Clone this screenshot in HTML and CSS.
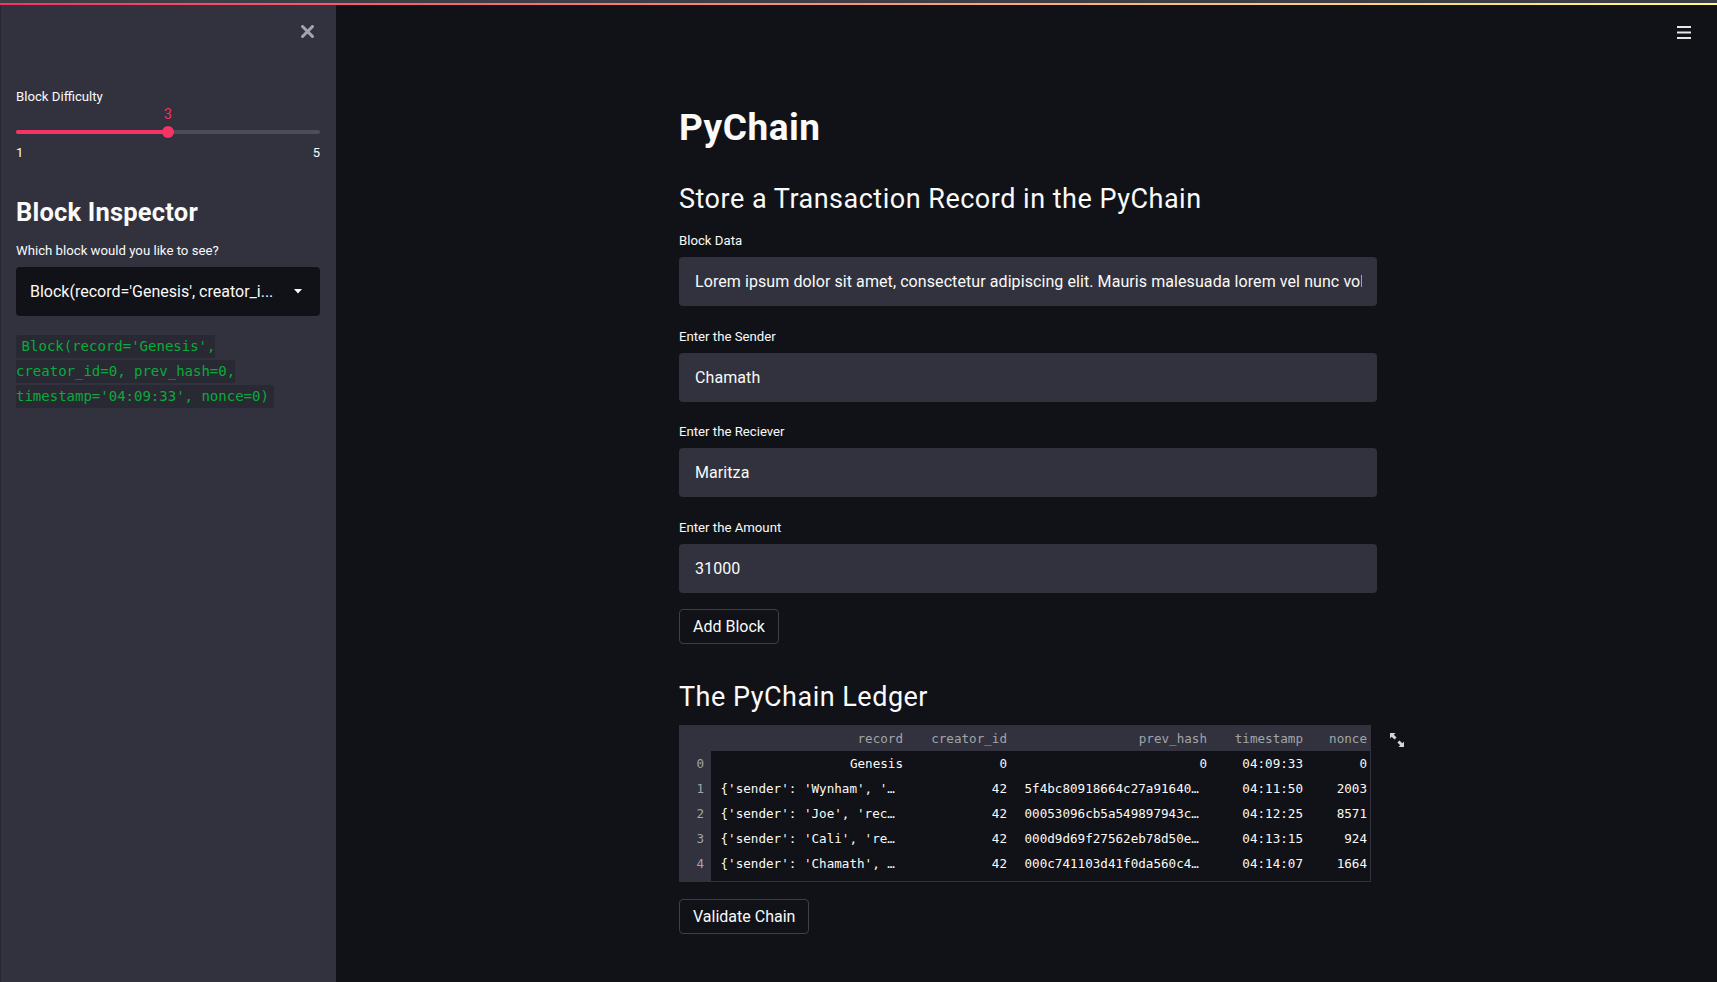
FILE: index.html
```html
<!DOCTYPE html>
<html lang="en">
<head>
<meta charset="utf-8">
<title>PyChain</title>
<link rel="stylesheet" href="styles.css">
</head>
<body>
<div class="topbar">
  <div class="topbar-chrome"></div>
  <div class="decoration"></div>
</div>
<div class="app">
  <aside class="sidebar">
    <div class="sidebar-close">
      <svg width="13" height="13" viewBox="0 0 13 13"><path d="M1.6 1.6L11.4 11.4M11.4 1.6L1.6 11.4" stroke="#a3a3ab" stroke-width="3" stroke-linecap="square"/></svg>
    </div>
    <div class="widget-label sb-slider-label">Block Difficulty</div>
    <div class="slider">
      <div class="slider-value-row"><span class="slider-value" style="left:50%">3</span></div>
      <div class="slider-track-row">
        <div class="slider-track">
          <div class="slider-fill" style="width:50%"></div>
          <div class="slider-thumb" style="left:50%"></div>
        </div>
      </div>
      <div class="slider-ticks"><span>1</span><span>5</span></div>
    </div>
    <h2 class="sb-heading">Block Inspector</h2>
    <div class="widget-label sb-select-label">Which block would you like to see?</div>
    <div class="select">
      <span class="select-text">Block(record='Genesis', creator_i...</span>
      <svg class="caret" width="8" height="5" viewBox="0 0 8 5"><path d="M0 0H8L4 4.5Z" fill="#fafafa"/></svg>
    </div>
    <p class="sb-code"><code>Block(record='Genesis', creator_id=0, prev_hash=0, timestamp='04:09:33', nonce=0)</code></p>
  </aside>

  <main class="main">
    <div class="main-header">
      <svg width="14" height="13" viewBox="0 0 14 13"><rect x="0" y="0" width="14" height="2" fill="#e6e6e6"/><rect x="0" y="5.5" width="14" height="2" fill="#e6e6e6"/><rect x="0" y="11" width="14" height="2" fill="#e6e6e6"/></svg>
    </div>
    <div class="block-container">
      <h1 class="title">PyChain</h1>
      <h3 class="subheader sub-store">Store a Transaction Record in the PyChain</h3>

      <div class="field field-first">
        <div class="widget-label">Block Data</div>
        <div class="input"><div class="input-text">Lorem ipsum dolor sit amet, consectetur adipiscing elit. Mauris malesuada lorem vel nunc volutpat, at tincidunt nisi malesuada.</div></div>
      </div>
      <div class="field">
        <div class="widget-label">Enter the Sender</div>
        <div class="input"><div class="input-text">Chamath</div></div>
      </div>
      <div class="field">
        <div class="widget-label">Enter the Reciever</div>
        <div class="input"><div class="input-text">Maritza</div></div>
      </div>
      <div class="field">
        <div class="widget-label">Enter the Amount</div>
        <div class="input"><div class="input-text">31000</div></div>
      </div>

      <button class="btn btn-add">Add Block</button>

      <h3 class="subheader sub-ledger">The PyChain Ledger</h3>

      <div class="table-wrap">
        <div class="table">
          <div class="th idx"></div>
          <div class="th">record</div>
          <div class="th">creator_id</div>
          <div class="th">prev_hash</div>
          <div class="th">timestamp</div>
          <div class="th">nonce</div>

          <div class="idx">0</div>
          <div class="td">Genesis</div>
          <div class="td">0</div>
          <div class="td">0</div>
          <div class="td">04:09:33</div>
          <div class="td">0</div>

          <div class="idx">1</div>
          <div class="td trunc-rec">{'sender': 'Wynham', '…</div>
          <div class="td">42</div>
          <div class="td trunc-hash">5f4bc80918664c27a91640…</div>
          <div class="td">04:11:50</div>
          <div class="td">2003</div>

          <div class="idx">2</div>
          <div class="td trunc-rec">{'sender': 'Joe', 'rec…</div>
          <div class="td">42</div>
          <div class="td trunc-hash">00053096cb5a549897943c…</div>
          <div class="td">04:12:25</div>
          <div class="td">8571</div>

          <div class="idx">3</div>
          <div class="td trunc-rec">{'sender': 'Cali', 're…</div>
          <div class="td">42</div>
          <div class="td trunc-hash">000d9d69f27562eb78d50e…</div>
          <div class="td">04:13:15</div>
          <div class="td">924</div>

          <div class="idx">4</div>
          <div class="td trunc-rec">{'sender': 'Chamath', …</div>
          <div class="td">42</div>
          <div class="td trunc-hash">000c741103d41f0da560c4…</div>
          <div class="td">04:14:07</div>
          <div class="td">1664</div>

          <div class="idx filler"></div>
          <div class="td filler filler-span"></div>
        </div>
        <div class="expand">
          <svg width="14" height="14" viewBox="0 0 14 14"><path d="M0 0H5.5L3.8 1.7L6.6 4.5L4.5 6.6L1.7 3.8L0 5.5Z M14 14H8.5L10.2 12.3L7.4 9.5L9.5 7.4L12.3 10.2L14 8.5Z" fill="#d4d4d8"/></svg>
        </div>
      </div>

      <button class="btn btn-validate">Validate Chain</button>
    </div>
  </main>
</div>
</body>
</html>
```

FILE: styles.css
```css
html, body {
  margin: 0;
  padding: 0;
  height: 100%;
}

body {
  background: #111217;
  color: #fafafa;
  font-family: Roboto, "Liberation Sans", sans-serif;
  overflow: hidden;
  display: flex;
  flex-direction: column;
}

/* top decoration */
.topbar-chrome {
  height: 3px;
  background: #3c3d45;
}
.decoration {
  height: 2px;
  background: linear-gradient(90deg, #f63366, #fffd80);
}

.app {
  flex: 1;
  display: flex;
  min-height: 0;
}

/* sidebar */
.sidebar {
  width: 336px;
  flex: 0 0 336px;
  box-sizing: border-box;
  background: #31323d;
  border-left: 1px solid #26272f;
  padding: 0 16px 0 15px;
}

.sidebar-close {
  display: flex;
  justify-content: flex-end;
  padding-top: 20px;
  padding-right: 6px;
  height: 13px;
}
.sidebar-close svg { display: block; }

.widget-label {
  font-size: 13.2px;
  line-height: 20px;
  color: #fafafa;
}

.sb-slider-label {
  margin-top: 49.6px;
  line-height: 18px;
}

.slider-value-row {
  position: relative;
  height: 16px;
}
.slider-value {
  position: absolute;
  top: 0;
  transform: translateX(-50%);
  font-size: 14px;
  line-height: 16px;
  color: #f63366;
}
.slider-track-row {
  height: 20.8px;
  display: flex;
  align-items: center;
}
.slider-track {
  position: relative;
  width: 100%;
  height: 4px;
  border-radius: 2px;
  background: #4b4d58;
}
.slider-fill {
  height: 100%;
  border-radius: 2px;
  background: #f63366;
}
.slider-thumb {
  position: absolute;
  top: 50%;
  width: 12px;
  height: 12px;
  border-radius: 50%;
  background: #f63366;
  transform: translate(-50%, -50%);
}
.slider-ticks {
  margin-top: 1.5px;
  display: flex;
  justify-content: space-between;
  font-size: 13px;
  line-height: 18px;
  color: #fafafa;
}

.sb-heading {
  margin: 33.8px 0 0;
  font-size: 25.5px;
  line-height: 32px;
  font-weight: 700;
  letter-spacing: 0.2px;
  color: #fafafa;
}

.sb-select-label {
  margin-top: 14px;
  line-height: 18px;
}

.select {
  margin-top: 7px;
  height: 49px;
  box-sizing: border-box;
  background: #111217;
  border-radius: 4px;
  display: flex;
  align-items: center;
  justify-content: space-between;
  padding: 0 18px 0 14px;
}
.select-text {
  font-size: 16px;
  color: #fafafa;
  white-space: nowrap;
}
.caret { display: block; }

.sb-code {
  margin: 19px 0 0;
  font-family: "DejaVu Sans Mono", "Liberation Mono", monospace;
  font-size: 14px;
  line-height: 25px;
}
.sb-code code {
  font-family: inherit;
  background: #282933;
  color: #09ab3b;
  padding: 3.3px 5.6px;
  border-radius: 3px;
}

/* main */
.main {
  flex: 1;
  min-width: 0;
}
.main-header {
  display: flex;
  justify-content: flex-end;
  padding: 20.5px 26px 0 0;
  height: 13px;
}
.main-header svg { display: block; }

.block-container {
  width: 730px;
  box-sizing: border-box;
  margin: 0 auto;
  padding: 67.5px 14.5px 0 17.5px;
}

.title {
  margin: 0;
  font-size: 37px;
  line-height: 44px;
  font-weight: 700;
  letter-spacing: 0.5px;
  color: #fafafa;
}

.subheader {
  margin: 0;
  font-size: 27px;
  line-height: 34px;
  font-weight: 400;
  letter-spacing: 0.5px;
  color: #fafafa;
}
.sub-store { margin-top: 31.5px; }

.field { margin-top: 20.7px; }
.field-first { margin-top: 15.5px; }
.field .widget-label { margin-bottom: 6px; }

.input {
  height: 49px;
  box-sizing: border-box;
  background: #31323d;
  border-radius: 4px;
  padding: 0 15px 0 16px;
  display: flex;
  align-items: center;
}
.input-text {
  width: 100%;
  overflow: hidden;
  white-space: nowrap;
  font-size: 16px;
  letter-spacing: 0.08px;
  color: #fafafa;
}

.btn {
  display: block;
  height: 34.5px;
  box-sizing: border-box;
  padding: 0 13px;
  background: transparent;
  border: 1px solid #3d3f47;
  border-radius: 4px;
  color: #fafafa;
  font-family: Roboto, "Liberation Sans", sans-serif;
  font-size: 16px;
}
.btn-add { margin-top: 16px; }
.btn-validate { margin-top: 17.5px; }

.sub-ledger { margin-top: 36.5px; }

/* table */
.table-wrap {
  position: relative;
  width: fit-content;
  margin-top: 10.5px;
}
.table {
  display: grid;
  grid-template-columns: 32px 195px 104px 200px 96px 64px;
  background: #31323d;
  padding: 0 1px 1px 0;
  font-family: "DejaVu Sans Mono", "Liberation Mono", monospace;
  font-size: 12.6px;
}
.table > div {
  white-space: nowrap;
  overflow: hidden;
}
.th {
  height: 26px;
  line-height: 27px;
  text-align: right;
  padding-right: 3px;
  color: #a3a4aa;
}
.idx {
  height: 25px;
  line-height: 25px;
  text-align: right;
  padding-right: 7px;
  color: #a3a4aa;
}
.th.idx { height: 26px; line-height: 26px; }
.td {
  height: 25px;
  line-height: 25px;
  text-align: right;
  padding-right: 3px;
  background: #111217;
  color: #fafafa;
}
.trunc-rec {
  text-align: left;
  padding-left: 9.5px;
}
.trunc-hash {
  text-align: left;
  padding-left: 14.5px;
}
.filler { height: 5px; }
.filler-span { grid-column: 2 / 7; }

.expand {
  position: absolute;
  left: calc(100% + 19px);
  top: 8px;
}
.expand svg { display: block; }
```
